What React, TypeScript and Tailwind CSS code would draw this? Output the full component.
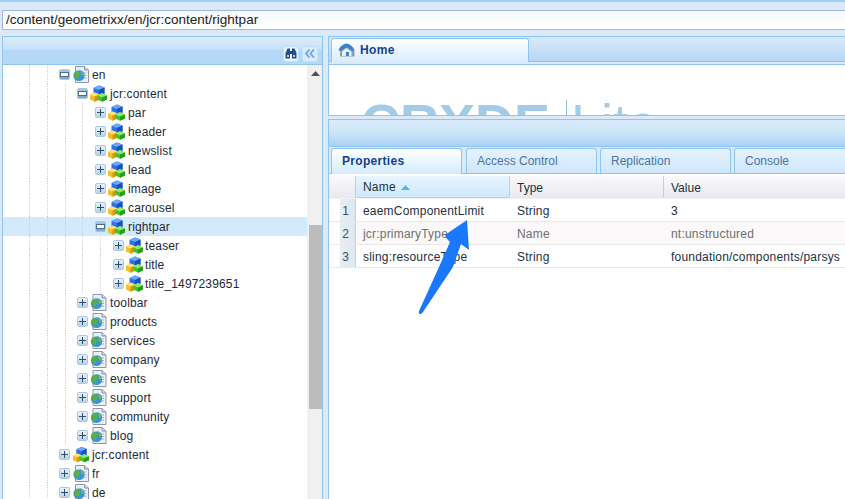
import React from "react";

function Cubes({ w = 17 }: { w?: number }) {
  return (
    <svg width={w} height="17" viewBox="0 0 17 17" className="shrink-0">
      <path d="M3.5 3 L9 0.5 L14.5 2.5 V8.5 L9 11 L3.5 9 Z" fill="#2a70e6" />
      <path d="M3.5 3 L9 0.5 L14.5 2.5 L9 5 Z" fill="#6ba8f5" />
      <path d="M9 5 L14.5 2.5 V8.5 L9 11 Z" fill="#1a4fc4" />
      <path d="M0 9.5 L4.5 7.5 L9.5 9.5 V14.5 L4.5 16.8 L0 14.5 Z" fill="#f2bf26" />
      <path d="M0 9.5 L4.5 7.5 L9.5 9.5 L4.5 11.5 Z" fill="#ffe27a" />
      <path d="M4.5 11.5 L9.5 9.5 V14.5 L4.5 16.8 Z" fill="#d6960f" />
      <path d="M7.5 10.5 L12 8 L17 10.5 V14.5 L12 16.8 L7.5 14.5 Z" fill="#43c22a" />
      <path d="M7.5 10.5 L12 8 L17 10.5 L12 12.5 Z" fill="#93e86e" />
      <path d="M12 12.5 L17 10.5 V14.5 L12 16.8 Z" fill="#23a018" />
    </svg>
  );
}

function PageGlobe({ w = 16 }: { w?: number }) {
  return (
    <svg width={w} height="17" viewBox="0 0 16 17" className="shrink-0">
      <path d="M2.5 0.5 H11.5 L15.5 4 V16.5 H2.5 Z" fill="#eef0f7" stroke="#8d94ae" />
      <path d="M11.5 0.5 V4 H15.5" fill="#cfd4e3" stroke="#8d94ae" />
      <path d="M10 7 H13.5 M10 9.5 H13.5 M10 12 H13.5" stroke="#a7adc2" />
      <circle cx="6" cy="9.5" r="5.6" fill="#3a93d6" />
      <path d="M1.5 7 C3.5 4.5 6 5 7 7.5 C7.5 10 5.5 10 5.5 12.5 C3.5 14 1 10.5 1.5 7 Z" fill="#5bb038" />
      <path d="M7.5 4.5 C9.5 5.5 11 8 10.5 10 L8.5 9 Z" fill="#74c248" />
      <path d="M3 5 C4.5 4 6 4 7 4.3" stroke="#bfe0f5" fill="none" />
    </svg>
  );
}

function Toggle({ open }: { open?: boolean }) {
  return (
    <span
      className={`w-[11px] h-[11px] shrink-0 rounded-[2px] border border-[#a9c8e2] flex items-center justify-center ${
        open ? "bg-gradient-to-b from-[#a9c9e3] to-[#7fa6c8]" : "bg-gradient-to-b from-[#e9f2fa] to-[#bcd3e6]"
      }`}
    >
      {open ? (
        <span className="w-[7px] h-[3px] bg-white border border-[#4b6d8e] box-content -my-px" />
      ) : (
        <svg width="7" height="7" viewBox="0 0 7 7">
          <path d="M0 3.5 H7 M3.5 0 V7" stroke="#2f4f70" strokeWidth="1" />
        </svg>
      )}
    </span>
  );
}

type Node = { label: string; depth: number; kind: "page" | "cube"; open?: boolean; selected?: boolean };

const nodes: Node[] = [
  { label: "en", depth: 0, kind: "page", open: true },
  { label: "jcr:content", depth: 1, kind: "cube", open: true },
  { label: "par", depth: 2, kind: "cube" },
  { label: "header", depth: 2, kind: "cube" },
  { label: "newslist", depth: 2, kind: "cube" },
  { label: "lead", depth: 2, kind: "cube" },
  { label: "image", depth: 2, kind: "cube" },
  { label: "carousel", depth: 2, kind: "cube" },
  { label: "rightpar", depth: 2, kind: "cube", open: true, selected: true },
  { label: "teaser", depth: 3, kind: "cube" },
  { label: "title", depth: 3, kind: "cube" },
  { label: "title_1497239651", depth: 3, kind: "cube" },
  { label: "toolbar", depth: 1, kind: "page" },
  { label: "products", depth: 1, kind: "page" },
  { label: "services", depth: 1, kind: "page" },
  { label: "company", depth: 1, kind: "page" },
  { label: "events", depth: 1, kind: "page" },
  { label: "support", depth: 1, kind: "page" },
  { label: "community", depth: 1, kind: "page" },
  { label: "blog", depth: 1, kind: "page" },
  { label: "jcr:content", depth: 0, kind: "cube" },
  { label: "fr", depth: 0, kind: "page" },
  { label: "de", depth: 0, kind: "page" },
];

const guideWidths = ["w-[18px]", "w-[17px]", "w-[18px]"];
const toggleMargins = ["ml-[11px]", "ml-[11px]", "ml-[12px]", "ml-[12px]"];

function TreeRow({ n }: { n: Node }) {
  const d0 = n.depth === 0;
  return (
    <div className={`flex h-[19px] items-center text-[12px] tracking-[0.15px] text-[#1c2a3a] ${n.selected ? "bg-[#d3e9fc]" : ""}`}>
      <span className="w-[27px] h-full shrink-0 border-r border-dotted border-[#e6c4c6]" />
      <span className="w-[18px] h-full shrink-0 border-r border-dotted border-[#e6c4c6]" />
      {guideWidths.slice(0, n.depth).map((w, i) => (
        <span key={i} className={`${w} h-full shrink-0 border-r border-dotted ${i === 0 ? "border-[#e6c4c6]" : "border-[#d4d2d6]"}`} />
      ))}
      <span className={toggleMargins[n.depth]}>
        <Toggle open={n.open} />
      </span>
      <span className={d0 ? "ml-[3px]" : "ml-[2px]"}>
        {n.kind === "cube" ? <Cubes w={d0 ? 16 : 17} /> : <PageGlobe w={d0 ? 16 : 17} />}
      </span>
      <span className={`${n.depth === 3 ? "ml-[2px]" : "ml-[3px]"} leading-none whitespace-nowrap`}>{n.label}</span>
    </div>
  );
}

function Tab({ label, active, margin }: { label: string; active?: boolean; margin: string }) {
  return (
    <div
      className={`w-[131px] shrink-0 ${margin} rounded-t-[3px] border border-[#8fc4f0] pl-[10px] flex items-center text-[12px] ${
        active
          ? "border-b-0 h-[26px] -mb-px pb-px bg-gradient-to-b from-[#ffffff] to-[#d3ebfe] font-bold tracking-[0.3px] text-[#15428b] relative z-10"
          : "h-[25px] bg-gradient-to-b from-[#e6f3fe] to-[#cfe6fb] text-[#4a74a8] border-b-0"
      }`}
    >
      {label}
    </div>
  );
}

const rows = [
  { n: "1", a: "eaemComponentLimit", b: "String", c: "3", muted: false },
  { n: "2", a: "jcr:primaryType", b: "Name", c: "nt:unstructured", muted: true },
  { n: "3", a: "sling:resourceType", b: "String", c: "foundation/components/parsys", muted: false },
];

export default function App() {
  return (
    <div className="relative w-[845px] h-[499px] overflow-hidden bg-[#dbe9f9] font-['Liberation_Sans',Arial,sans-serif]">
      <div className="h-[2px] bg-[#9fd0f8]" />
      <div className="pt-[8px] pl-[2px]">
        <div className="h-[20px] border border-[#a9b6dc] border-r-0 bg-gradient-to-b from-[#f4f8fc] to-[#ffffff] pl-[3px] flex items-center text-[13.5px] text-[#222]">
          /content/geometrixx/en/jcr:content/rightpar
        </div>
      </div>
      <div className="flex pt-[6px] pl-[2px] h-[469px]">
        {/* left panel */}
        <div className="w-[321px] shrink-0 border border-b-0 border-[#8fc4f0] flex flex-col overflow-hidden">
          <div className="h-[28px] shrink-0 border-b border-[#8fc4f0] bg-gradient-to-b from-[#dcedfb] from-0% via-[#c6e1f8] via-45% to-[#b4d9f6] to-50% flex items-center justify-end gap-[3px] pr-[4px] pt-[6px]">
            <span className="w-[16px] h-[16px] rounded-[3px] border border-[#bfe0fa] bg-[#eaf4fd] flex items-center justify-center">
              <svg width="12" height="11" viewBox="0 0 12 11">
                <path d="M0.5 10.5 V5 L2.5 0.5 H5 V10.5 Z M7 10.5 V0.5 H9.5 L11.5 5 V10.5 Z" fill="#23508c" />
                <rect x="5" y="3" width="2" height="3" fill="#23508c" />
                <rect x="2" y="7" width="2" height="2" fill="#a9c7e5" />
                <rect x="8" y="7" width="2" height="2" fill="#a9c7e5" />
              </svg>
            </span>
            <span className="w-[16px] h-[16px] rounded-[3px] border border-[#bfe0fa] bg-[#d9ecfb] flex items-center justify-center">
              <svg width="10" height="9" viewBox="0 0 10 9" fill="none" stroke="#6aa5dc" strokeWidth="1.8">
                <path d="M4.5 0.5 L1 4.5 L4.5 8.5 M9 0.5 L5.5 4.5 L9 8.5" />
              </svg>
            </span>
          </div>
          <div className="flex flex-1 min-h-0 bg-white">
            <div className="flex-1 min-w-0 overflow-hidden">
              {nodes.map((n, i) => (
                <TreeRow key={i} n={n} />
              ))}
            </div>
            <div className="w-[15px] shrink-0 bg-[#f0f0f0] flex flex-col items-end">
              <svg width="9" height="5" viewBox="0 0 9 5" className="mt-[6px] mr-[2px] shrink-0">
                <path d="M4.5 0 L9 5 H0 Z" fill="#505050" />
              </svg>
              <div className="mt-[149px] w-[13px] h-[184px] bg-[#bcbcbc] shrink-0" />
            </div>
          </div>
        </div>

        {/* right column */}
        <div className="flex-1 min-w-0 ml-[5px] flex flex-col">
          <div className="h-[80px] shrink-0 border border-r-0 border-[#8fc4f0] flex flex-col">
            <div className="h-[25px] shrink-0 border-b border-[#8fc4f0] bg-gradient-to-b from-[#d9e9f8] to-[#b6d7f4] flex items-end pl-[2px]">
              <div className="w-[198px] h-[24px] pb-[2px] -mb-px rounded-t-[3px] border border-b-0 border-[#8fc4f0] bg-gradient-to-b from-[#ffffff] to-[#d6edff] flex items-center pl-[6px] text-[12px] tracking-[0.4px] font-bold text-[#15428b]">
                <svg width="17" height="14" viewBox="0 0 17 14" className="mr-[5px]">
                  <path d="M8.5 1 L16.5 7 V13.5 H2 V8 L0.5 7 Z" fill="#8f9cac" />
                  <path d="M8.5 0.5 C5 1 2 3.5 0.5 7 L3 8 L8.5 4 L14 8 L16.5 7 C15 3.5 12 1 8.5 0.5 Z" fill="#3a82cf" />
                  <path d="M4 8.5 L8.5 5 L13.5 8.5 V13 H4 Z" fill="#e9eef4" />
                  <rect x="8" y="9" width="3" height="4" fill="#3a82cf" />
                </svg>
                Home
              </div>
            </div>
            <div className="mt-[2px] flex-1 min-h-0 border-t border-[#8fc4f0] bg-white overflow-hidden pl-[32px] pt-[31px] flex items-start text-[#a3cbe6] leading-none">
              <span className="text-[54px] font-bold whitespace-nowrap">CRXDE</span>
              <span className="ml-[16px] mt-[4px] w-px h-[60px] bg-[#8fbfe0] shrink-0" />
              <span className="ml-[4px] text-[54px] whitespace-nowrap">Lite</span>
            </div>
          </div>
          <div className="mt-[3px] flex-1 min-h-0 border border-r-0 border-b-0 border-[#8fc4f0] flex flex-col">
            <div className="h-[27px] shrink-0 border-b border-[#8fc4f0] bg-gradient-to-b from-[#d9ecfb] via-[#cbe4f9] to-[#a9d2f4]" />
            <div className="h-[27px] shrink-0 border-b border-[#8fc4f0] bg-[#d9ebfa] flex items-end pl-[2px]">
              <Tab label="Properties" active margin="mr-[4px]" />
              <Tab label="Access Control" margin="mr-[3px]" />
              <Tab label="Replication" margin="mr-[3px]" />
              <Tab label="Console" margin="" />
            </div>
            <div className="flex-1 min-h-0 bg-white text-[12px]">
              <div className="flex h-[23px] mt-[2px] border-b border-[#eef0f4] bg-gradient-to-b from-[#fbf9fa] to-[#e6e9ee] text-[#23303f]">
                <span className="w-[27px] shrink-0 border-r border-[#d8c8c8]" />
                <span className="w-[154px] shrink-0 pl-[7px] pt-px flex items-center gap-[5px] bg-gradient-to-b from-[#e8f5fe] to-[#cde8fb] border-r border-b border-[#a8d8f5] tracking-[0.2px]">
                  Name
                  <svg width="9" height="5" viewBox="0 0 9 5"><path d="M4.5 0 L9 5 H0 Z" fill="#5eb0de" /></svg>
                </span>
                <span className="w-[154px] shrink-0 pl-[7px] pt-px flex items-center border-r border-[#dcc8c8]">Type</span>
                <span className="flex-1 pl-[7px] pt-px flex items-center">Value</span>
              </div>
              {rows.map((r) => (
                <div key={r.n} className={`flex h-[23px] border-b border-[#ece8ea] tracking-[0.2px] ${r.muted ? "bg-[#faf8f9] text-[#6e6e6e]" : "bg-white text-[#23303f]"}`}>
                  <span className="w-[27px] shrink-0 flex items-center justify-end pr-[6px] pt-px bg-[linear-gradient(90deg,#ffffff_42%,#e6eef3_44%,#dfe8ee_100%)] border-r border-[#d8c8c8] text-[#40505f]">{r.n}</span>
                  <span className="w-[154px] shrink-0 pl-[7px] pt-px flex items-center">{r.a}</span>
                  <span className="w-[154px] shrink-0 pl-[7px] pt-px flex items-center">{r.b}</span>
                  <span className="flex-1 pl-[7px] pt-px flex items-center whitespace-nowrap">{r.c}</span>
                </div>
              ))}
            </div>
          </div>
        </div>
      </div>
      <svg width="60" height="105" viewBox="0 0 60 105" className="absolute left-[415px] top-[214px]">
        <path d="M52 6 L54 36 L46 30 L38 53 L8 98 C6 101 3 101 4 97 L24 53 L35 28 C33 26 31 24 30 21 Z" fill="#1a78ff" />
      </svg>
    </div>
  );
}
